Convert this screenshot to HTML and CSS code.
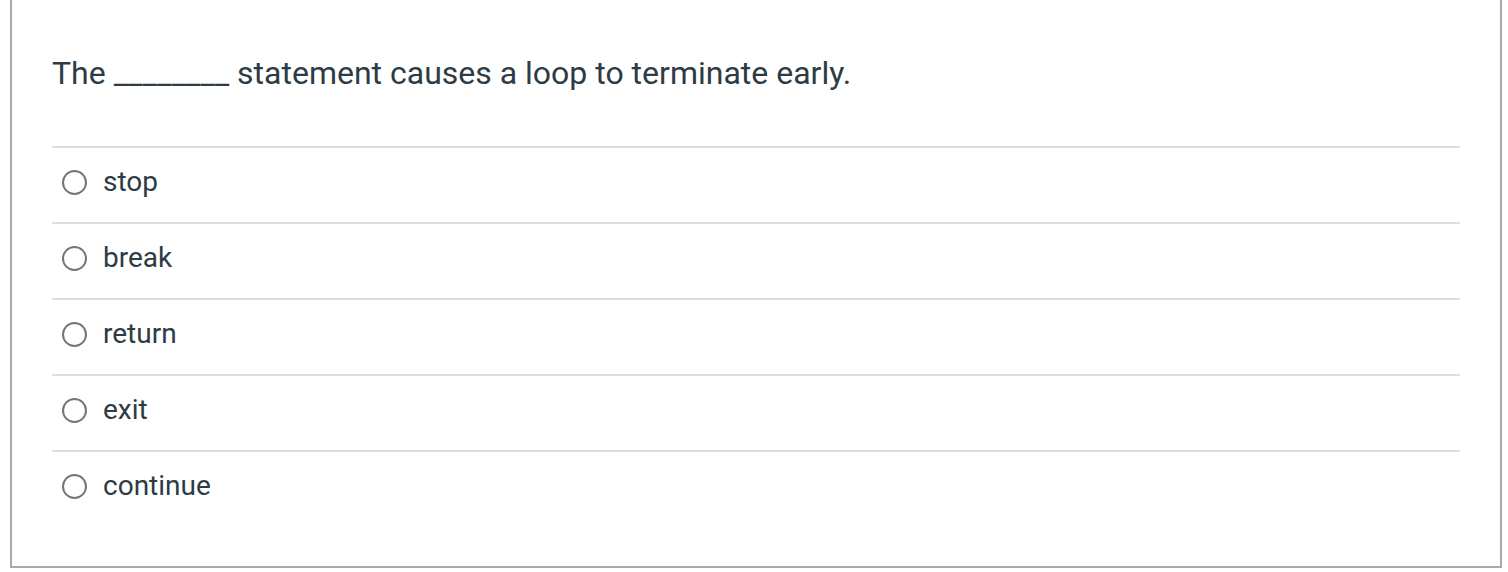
FILE: index.html
```html
<!DOCTYPE html>
<html lang="en">
<head>
<meta charset="utf-8">
<title>Quiz question</title>
<link rel="stylesheet" href="styles.css">
</head>
<body>
<div class="card">
  <div class="question">The ________ statement causes a loop to terminate early.</div>
  <ul class="answers">
    <li class="answer"><span class="radio"></span><span class="label">stop</span></li>
    <li class="answer"><span class="radio"></span><span class="label">break</span></li>
    <li class="answer"><span class="radio"></span><span class="label">return</span></li>
    <li class="answer"><span class="radio"></span><span class="label">exit</span></li>
    <li class="answer"><span class="radio"></span><span class="label">continue</span></li>
  </ul>
</div>
</body>
</html>
```

FILE: styles.css
```css
html, body {
  margin: 0;
  padding: 0;
  background: #ffffff;
}

body {
  font-family: Roboto, "Liberation Sans", sans-serif;
  color: #2d3b45;
}

.card {
  box-sizing: border-box;
  margin-left: 10px;
  width: 1492px;
  height: 568px;
  border: 2px solid #a9a9a9;
  border-top: none;
  padding: 0 40px 39px;
}

.question {
  font-size: 32px;
  line-height: 40px;
  padding: 53px 0;
}

.answers {
  list-style: none;
  margin: 0;
  padding: 0;
}

.answer {
  display: flex;
  align-items: center;
  border-top: 2px solid #dedede;
  padding: 22px 0 28px 10px;
  height: 24px;
}

.radio {
  box-sizing: border-box;
  width: 25px;
  height: 25px;
  border: 2px solid #757575;
  border-radius: 50%;
  flex: none;
}

.label {
  font-size: 28px;
  line-height: 24px;
  margin-left: 16px;
}
```
